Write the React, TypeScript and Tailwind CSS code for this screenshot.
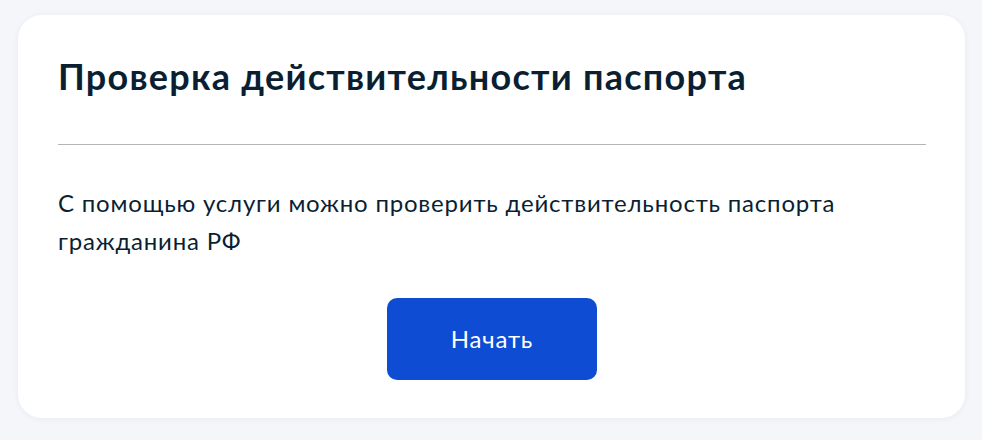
export default function App() {
  return (
    <div
      className="min-h-[440px] w-full bg-[#f4f6fa] pl-[18px] pr-[17px] pt-[15px] pb-[22px]"
      style={{ fontFamily: "Lato, 'Noto Sans', sans-serif" }}
    >
      <section className="rounded-[24px] bg-white pl-[40px] pr-[39px] pt-[39px] pb-[38px] shadow-[0_1px_6px_rgba(30,50,90,0.06)]">
        <h1 className="text-[36px] font-bold leading-[44px] tracking-[1.25px] text-[#0b1f33]">
          Проверка действительности паспорта
        </h1>
        <hr className="mt-[46px] border-0 border-t border-[#b5b5b5]" />
        <p className="mt-[39px] text-[24px] leading-[38px] tracking-[0.8px] text-[#0b1f33]">
          С помощью услуги можно проверить действительность паспорта
          <br />
          гражданина РФ
        </p>
        <div className="mt-[38px] flex justify-center">
          <button className="h-[82px] w-[210px] rounded-[10px] bg-[#0d4cd3] text-[24px] tracking-[0.8px] text-white">
            Начать
          </button>
        </div>
      </section>
    </div>
  );
}
